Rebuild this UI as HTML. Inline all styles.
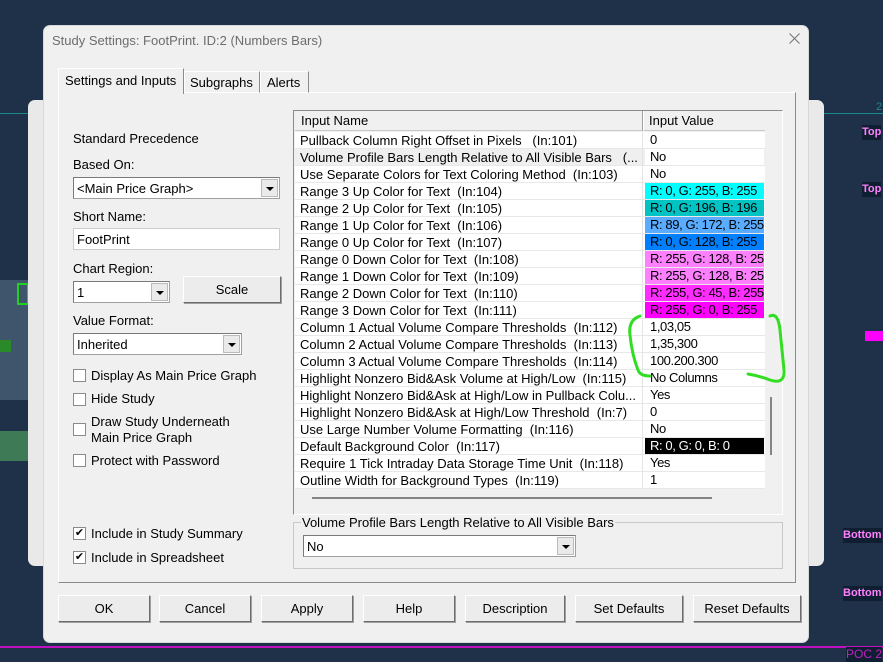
<!DOCTYPE html>
<html><head><meta charset="utf-8">
<style>
*{box-sizing:border-box;margin:0;padding:0}
body{width:883px;height:662px;overflow:hidden;background:#1f3149;font-family:"Liberation Sans",Arial,sans-serif;font-size:13px;color:#000;position:relative}
.a{position:absolute}
.t{position:absolute;white-space:nowrap;line-height:15px}
.combo{position:absolute;background:#fff;border:1px solid #a0a0a0;border-top-color:#7a7a7a;border-left-color:#7a7a7a;box-shadow:inset 0 0 0 1px #fff}
.combo .arr{position:absolute;right:1px;top:1px;bottom:1px;width:17px;background:#eaeaea;border:1px solid #bbb}
.combo .arr:after{content:"";position:absolute;left:4px;top:7px;border-left:4px solid transparent;border-right:4px solid transparent;border-top:4px solid #000}
.btn{position:absolute;background:#ececec;border:1px solid #fff;border-right-color:#6d6d6d;border-bottom-color:#6d6d6d;box-shadow:1px 1px 0 #a0a0a0;text-align:center;line-height:25px}
.cb{position:absolute;width:13px;height:13px;background:#fff;border:1px solid #8a8a8a}
.row{position:absolute;left:0;width:470px;height:17px;border-bottom:1px solid #e8e8e8}
.row .n{position:absolute;left:5px;top:1px;white-space:nowrap}
.row .v{position:absolute;left:350px;top:0;width:119px;height:16px;padding-left:5px;line-height:16px;white-space:nowrap;overflow:hidden;letter-spacing:-0.4px}
</style></head><body>
<div class="a" style="left:0;top:113px;width:883px;height:1px;background:#1a8a8a"></div>
<div class="a" style="left:0;top:280px;width:40px;height:120px;background:#3e556c"></div>
<div class="a" style="left:0;top:431px;width:40px;height:30px;background:#3d7a55"></div>
<div class="a" style="left:17px;top:283px;width:12px;height:22px;border:2px solid #22d022"></div>
<div class="a" style="left:0;top:340px;width:11px;height:12px;background:#2a8a2a"></div>
<div class="a" style="left:0;top:646px;width:883px;height:2px;background:#c010c0"></div>
<div class="t" style="left:862px;top:125px;background:#0f1e30;color:#ff80ff;font-size:11px;font-weight:bold">Top</div>
<div class="t" style="left:862px;top:182px;background:#0f1e30;color:#ff80ff;font-size:11px;font-weight:bold">Top</div>
<div class="t" style="left:843px;top:528px;background:#0f1e30;color:#ff80ff;font-size:11px;font-weight:bold">Bottom</div>
<div class="t" style="left:843px;top:586px;background:#0f1e30;color:#ff80ff;font-size:11px;font-weight:bold">Bottom</div>
<div class="t" style="left:846px;top:647px;background:#0f1e30;color:#c020c0;font-size:12px">POC 2</div>
<div class="a" style="left:865px;top:331px;width:18px;height:10px;background:#ff00ff"></div>
<div class="t" style="left:876px;top:100px;color:#1a8a8a;font-size:11px">2</div>
<div class="a" style="left:28px;top:100px;width:796px;height:466px;background:#e9e9e9;border-radius:7px"></div>
<div class="a" style="left:43px;top:25px;width:766px;height:618px;background:#f0f0f0;border-radius:7px;border:1px solid #d8d8d8"></div>
<div class="t" style="left:52px;top:33px;color:#6d6d6d">Study Settings: FootPrint. ID:2 (Numbers Bars)</div>
<svg class="a" style="left:789px;top:33px" width="11" height="11"><path d="M0.5 0.5L10.5 10.5M10.5 0.5L0.5 10.5" stroke="#777" stroke-width="1.1"/></svg>
<div class="a" style="left:58px;top:92px;width:738px;height:491px;border:1px solid #fff;border-right-color:#8a8a8a;border-bottom-color:#8a8a8a"></div>
<div class="a" style="left:184px;top:71px;width:76px;height:22px;border:1px solid #fff;border-right-color:#8a8a8a;background:#f0f0f0"></div>
<div class="t" style="left:190px;top:75px">Subgraphs</div>
<div class="a" style="left:260px;top:71px;width:49px;height:22px;border:1px solid #fff;border-right-color:#8a8a8a;background:#f0f0f0"></div>
<div class="t" style="left:267px;top:75px">Alerts</div>
<div class="a" style="left:58px;top:68px;width:126px;height:26px;border:1px solid #fff;border-right-color:#8a8a8a;background:#f0f0f0;border-bottom:none"></div>
<div class="t" style="left:65px;top:73px">Settings and Inputs</div>
<div class="t" style="left:73px;top:131px">Standard Precedence</div>
<div class="t" style="left:73px;top:157px">Based On:</div>
<div class="combo" style="left:73px;top:177px;width:207px;height:22px"><div class="t" style="left:3px;top:3px">&lt;Main Price Graph&gt;</div><div class="arr"></div></div>
<div class="t" style="left:73px;top:209px">Short Name:</div>
<div class="combo" style="left:73px;top:228px;width:207px;height:22px;border-color:#ccc"><div class="t" style="left:3px;top:3px">FootPrint</div></div>
<div class="t" style="left:73px;top:261px">Chart Region:</div>
<div class="combo" style="left:73px;top:281px;width:97px;height:22px"><div class="t" style="left:3px;top:3px">1</div><div class="arr"></div></div>
<div class="btn" style="left:183px;top:276px;width:98px;height:27px">Scale</div>
<div class="t" style="left:73px;top:313px">Value Format:</div>
<div class="combo" style="left:73px;top:333px;width:169px;height:22px"><div class="t" style="left:3px;top:3px">Inherited</div><div class="arr"></div></div>
<div class="cb" style="left:73px;top:369px"></div><div class="t" style="left:91px;top:368px">Display As Main Price Graph</div>
<div class="cb" style="left:73px;top:393px"></div><div class="t" style="left:91px;top:391px">Hide Study</div>
<div class="cb" style="left:73px;top:423px"></div><div class="t" style="left:91px;top:414px">Draw Study Underneath</div><div class="t" style="left:91px;top:430px">Main Price Graph</div>
<div class="cb" style="left:73px;top:454px"></div><div class="t" style="left:91px;top:453px">Protect with Password</div>
<div class="cb" style="left:73px;top:527px;font-size:11px;line-height:11px;text-align:center">✔</div><div class="t" style="left:91px;top:526px">Include in Study Summary</div>
<div class="cb" style="left:73px;top:551px;font-size:11px;line-height:11px;text-align:center">✔</div><div class="t" style="left:91px;top:550px">Include in Spreadsheet</div>
<div class="a" style="left:293px;top:110px;width:490px;height:405px;background:#f0f0f0;border:1px solid #8a8a8a;border-right-color:#fff;border-bottom-color:#fff"></div>
<div class="a" style="left:295px;top:111px;width:470px;height:20px;background:#f0f0f0;border-bottom:1px solid #c8c8c8"></div>
<div class="a" style="left:642px;top:111px;width:2px;height:20px;border-left:1px solid #a0a0a0;border-right:1px solid #fff"></div>
<div class="t" style="left:301px;top:113px">Input Name</div>
<div class="t" style="left:649px;top:113px">Input Value</div>
<div class="a" style="left:295px;top:132px;width:470px;height:357px;background:#fff">
<div class="row" style="top:0"><div class="n">Pullback Column Right Offset in Pixels &nbsp; (In:101)</div><div class="v">0</div></div>
<div class="row" style="top:17px;background:#efefef"><div class="n">Volume Profile Bars Length Relative to All Visible Bars &nbsp; (...</div><div class="v" style="background:#fff">No</div></div>
<div class="row" style="top:34px"><div class="n">Use Separate Colors for Text Coloring Method &nbsp;(In:103)</div><div class="v">No</div></div>
<div class="row" style="top:51px"><div class="n">Range 3 Up Color for Text &nbsp;(In:104)</div><div class="v" style="background:#00ffff">R: 0, G: 255, B: 255</div></div>
<div class="row" style="top:68px"><div class="n">Range 2 Up Color for Text &nbsp;(In:105)</div><div class="v" style="background:#00c4c4">R: 0, G: 196, B: 196</div></div>
<div class="row" style="top:85px"><div class="n">Range 1 Up Color for Text &nbsp;(In:106)</div><div class="v" style="background:#59acff">R: 89, G: 172, B: 255</div></div>
<div class="row" style="top:102px"><div class="n">Range 0 Up Color for Text &nbsp;(In:107)</div><div class="v" style="background:#0080ff">R: 0, G: 128, B: 255</div></div>
<div class="row" style="top:119px"><div class="n">Range 0 Down Color for Text &nbsp;(In:108)</div><div class="v" style="background:#ff80ff">R: 255, G: 128, B: 255</div></div>
<div class="row" style="top:136px"><div class="n">Range 1 Down Color for Text &nbsp;(In:109)</div><div class="v" style="background:#ff80ff">R: 255, G: 128, B: 255</div></div>
<div class="row" style="top:153px"><div class="n">Range 2 Down Color for Text &nbsp;(In:110)</div><div class="v" style="background:#ff2dff">R: 255, G: 45, B: 255</div></div>
<div class="row" style="top:170px"><div class="n">Range 3 Down Color for Text &nbsp;(In:111)</div><div class="v" style="background:#ff00ff">R: 255, G: 0, B: 255</div></div>
<div class="row" style="top:187px"><div class="n">Column 1 Actual Volume Compare Thresholds &nbsp;(In:112)</div><div class="v">1,03,05</div></div>
<div class="row" style="top:204px"><div class="n">Column 2 Actual Volume Compare Thresholds &nbsp;(In:113)</div><div class="v">1,35,300</div></div>
<div class="row" style="top:221px"><div class="n">Column 3 Actual Volume Compare Thresholds &nbsp;(In:114)</div><div class="v">100.200.300</div></div>
<div class="row" style="top:238px"><div class="n">Highlight Nonzero Bid&amp;Ask Volume at High/Low &nbsp;(In:115)</div><div class="v">No Columns</div></div>
<div class="row" style="top:255px"><div class="n">Highlight Nonzero Bid&amp;Ask at High/Low in Pullback Colu...</div><div class="v">Yes</div></div>
<div class="row" style="top:272px"><div class="n">Highlight Nonzero Bid&amp;Ask at High/Low Threshold &nbsp;(In:7)</div><div class="v">0</div></div>
<div class="row" style="top:289px"><div class="n">Use Large Number Volume Formatting &nbsp;(In:116)</div><div class="v">No</div></div>
<div class="row" style="top:306px"><div class="n">Default Background Color &nbsp;(In:117)</div><div class="v" style="background:#000;color:#fff">R: 0, G: 0, B: 0</div></div>
<div class="row" style="top:323px"><div class="n">Require 1 Tick Intraday Data Storage Time Unit &nbsp;(In:118)</div><div class="v">Yes</div></div>
<div class="row" style="top:340px"><div class="n">Outline Width for Background Types &nbsp;(In:119)</div><div class="v">1</div></div>
</div>
<div class="a" style="left:642px;top:132px;width:1px;height:357px;background:#e4e4e4"></div>
<div class="a" style="left:312px;top:497px;width:400px;height:2px;background:#858585"></div>
<div class="a" style="left:770px;top:397px;width:2px;height:58px;background:#858585"></div>
<div class="a" style="left:293px;top:522px;width:490px;height:47px;border:1px solid #c8c8c8"></div>
<div class="t" style="left:301px;top:515px;background:#f0f0f0;padding:0 1px">Volume Profile Bars Length Relative to All Visible Bars</div>
<div class="combo" style="left:303px;top:535px;width:273px;height:22px"><div class="t" style="left:3px;top:3px">No</div><div class="arr"></div></div>
<svg class="a" style="left:620px;top:310px" width="170" height="80" viewBox="0 0 170 80"><path d="M20 6 Q8 10 10 25 Q12 45 18 60 Q20 66 30 66 M150 6 Q158 2 160 20 Q162 40 164 60 Q165 75 150 70 Q140 66 128 64" fill="none" stroke="#33dd22" stroke-width="3" stroke-linecap="round"/></svg>
<div class="btn" style="left:58px;top:595px;width:92px;height:27px">OK</div>
<div class="btn" style="left:159px;top:595px;width:92px;height:27px">Cancel</div>
<div class="btn" style="left:261px;top:595px;width:92px;height:27px">Apply</div>
<div class="btn" style="left:363px;top:595px;width:92px;height:27px">Help</div>
<div class="btn" style="left:465px;top:595px;width:100px;height:27px">Description</div>
<div class="btn" style="left:575px;top:595px;width:108px;height:27px">Set Defaults</div>
<div class="btn" style="left:693px;top:595px;width:108px;height:27px">Reset Defaults</div>
</body></html>
